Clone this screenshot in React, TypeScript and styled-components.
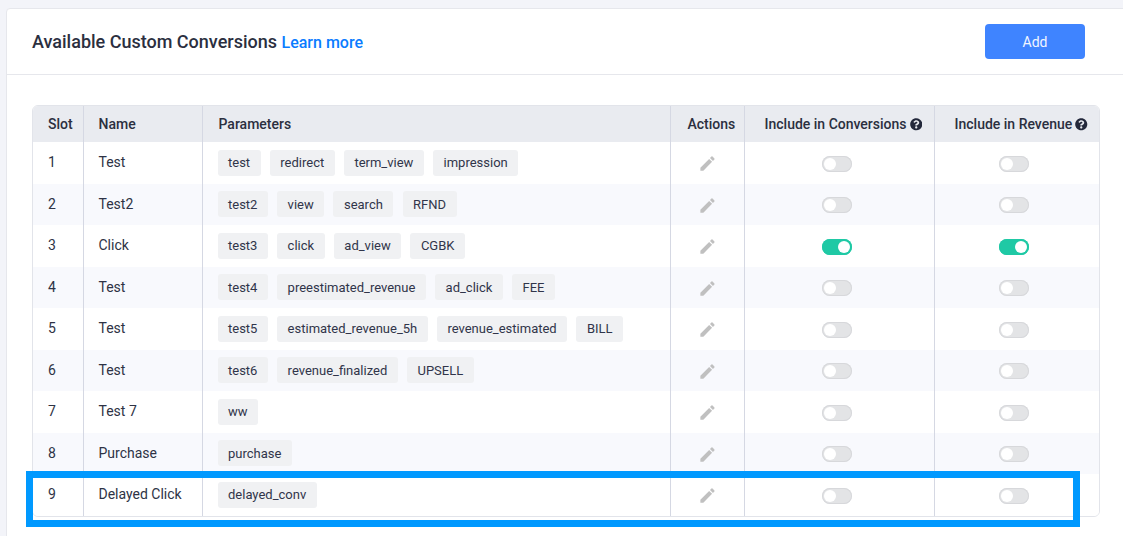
import * as React from 'react'
import styled, { createGlobalStyle } from 'styled-components'
import { FaQuestionCircle } from 'react-icons/fa'
import { MdEdit } from 'react-icons/md'

const GlobalStyle = createGlobalStyle`
  html, body {
    margin: 0;
    height: 100%;
    overflow: hidden;
    background: #f3f4f9;
    font-family: Roboto, "Liberation Sans", sans-serif;
  }
`

const Page = styled.div`
  position: relative;
  width: 1123px;
  height: 536px;
  overflow: hidden;
  padding: 8px 0 0 6px;
  box-sizing: border-box;
`

const Card = styled.section`
  width: 1140px;
  height: 560px;
  background: #fff;
  border: 1px solid #e6e7ec;
  border-radius: 4px;
  box-sizing: border-box;
`

const CardHeader = styled.header`
  display: flex;
  align-items: center;
  justify-content: space-between;
  height: 65px;
  padding: 0 37px 0 25px;
  border-bottom: 1px solid #e6e7ec;
`

const Title = styled.h2`
  margin: 0;
  font-size: 18px;
  font-weight: 500;
  color: #2b2f3f;
`

const LearnMore = styled.a`
  font-size: 16px;
  font-weight: 500;
  color: #0a7cff;
  text-decoration: none;
`

const AddButton = styled.button`
  width: 100px;
  height: 35px;
  margin-right: 23px;
  border: 0;
  border-radius: 4px;
  background: #3f84ff;
  color: #f1f5ff;
  font: 400 14px Roboto, sans-serif;
`

const CardBody = styled.div`
  padding: 30px 0 0 25px;
`

const TableFrame = styled.div`
  width: 1068px;
  border: 1px solid #e2e4ea;
  border-radius: 6px;
  overflow: hidden;
  box-sizing: border-box;
`

const Table = styled.table`
  width: 1066px;
  table-layout: fixed;
  border-collapse: collapse;
  font-size: 14px;
  color: #2e3345;
`

const HeadCell = styled.th<{ $inset?: number }>`
  height: 36px;
  padding: 0 0 0 ${(p) => p.$inset ?? 15}px;
  background: #e9ebf0;
  border-left: 1px solid #d5d8e3;
  font-weight: 500;
  text-align: left;
  white-space: nowrap;
  color: #2b2f3f;
  &:first-child {
    border-left: 0;
  }
`

const Row = styled.tr<{ $shaded: boolean }>`
  height: 41.5px;
  background: ${(p) => (p.$shaded ? '#f8f9fd' : '#fff')};
`

const Cell = styled.td`
  padding: 0 0 1px 15px;
  border-left: 1px solid #d5d8e3;
  box-sizing: border-box;
  &:first-child {
    border-left: 0;
  }
`

const TagCell = styled(Cell)`
  padding: 0 0 0 15px;
`

const ControlCell = styled(Cell)<{ $right?: number }>`
  padding: 2px ${(p) => p.$right ?? 0}px 0 0;
`

const TagList = styled.div`
  display: flex;
  gap: 9.2px;
`

const Tag = styled.span`
  display: inline-flex;
  align-items: center;
  height: 26px;
  padding: 0 10.5px;
  border-radius: 3px;
  background: #f0f1f3;
  font-size: 13px;
  color: #30354a;
`

const HelpIcon = styled(FaQuestionCircle)`
  width: 12.5px;
  height: 12.5px;
  margin-left: 3px;
  vertical-align: -1.5px;
  color: #23283b;
`

const PencilIcon = styled(MdEdit)`
  display: block;
  width: 19px;
  height: 19px;
  margin: 0 auto;
  color: #c0c0c0;
`

const Toggle = styled.span<{ $on: boolean }>`
  display: flex;
  justify-content: ${(p) => (p.$on ? 'flex-end' : 'flex-start')};
  width: 30px;
  height: 16px;
  margin: 0 auto;
  padding: 2px;
  border-radius: 8px;
  box-sizing: border-box;
  background: ${(p) => (p.$on ? '#1fc9a5' : '#e3e4e6')};
  box-shadow: inset 0 0 0 1px ${(p) => (p.$on ? '#1fc9a5' : '#d7d8db')};
  &::after {
    content: '';
    width: 12px;
    height: 12px;
    border-radius: 50%;
    background: #fff;
  }
`

const Highlight = styled.div`
  position: absolute;
  left: 26px;
  top: 471px;
  width: 1054px;
  height: 56px;
  border: 7px solid #0099ff;
  box-sizing: border-box;
  pointer-events: none;
`

const rows = [
  { name: 'Test', params: ['test', 'redirect', 'term_view', 'impression'] },
  { name: 'Test2', params: ['test2', 'view', 'search', 'RFND'] },
  { name: 'Click', params: ['test3', 'click', 'ad_view', 'CGBK'], on: true },
  { name: 'Test', params: ['test4', 'preestimated_revenue', 'ad_click', 'FEE'] },
  { name: 'Test', params: ['test5', 'estimated_revenue_5h', 'revenue_estimated', 'BILL'] },
  { name: 'Test', params: ['test6', 'revenue_finalized', 'UPSELL'] },
  { name: 'Test 7', params: ['ww'] },
  { name: 'Purchase', params: ['purchase'] },
  { name: 'Delayed Click', params: ['delayed_conv'] },
]

export default function App() {
  return (
    <Page>
      <GlobalStyle />
      <Card>
        <CardHeader>
          <Title>
            Available Custom Conversions <LearnMore href="#">Learn more</LearnMore>
          </Title>
          <AddButton>Add</AddButton>
        </CardHeader>
        <CardBody>
          <TableFrame>
            <Table>
              <colgroup>
                <col width={50} />
                <col width={119} />
                <col width={468} />
                <col width={74} />
                <col width={190} />
                <col width={165} />
              </colgroup>
              <thead>
                <tr>
                  <HeadCell>Slot</HeadCell>
                  <HeadCell>Name</HeadCell>
                  <HeadCell $inset={16}>Parameters</HeadCell>
                  <HeadCell $inset={17}>Actions</HeadCell>
                  <HeadCell $inset={20}>
                    Include in Conversions
                    <HelpIcon />
                  </HeadCell>
                  <HeadCell $inset={20}>
                    Include in Revenue
                    <HelpIcon />
                  </HeadCell>
                </tr>
              </thead>
              <tbody>
                {rows.map((row, i) => (
                  <Row key={i} $shaded={i % 2 === 1}>
                    <Cell>{i + 1}</Cell>
                    <Cell>{row.name}</Cell>
                    <TagCell>
                      <TagList>
                        {row.params.map((p) => (
                          <Tag key={p}>{p}</Tag>
                        ))}
                      </TagList>
                    </TagCell>
                    <ControlCell>
                      <PencilIcon />
                    </ControlCell>
                    <ControlCell $right={4}>
                      <Toggle $on={!!row.on} />
                    </ControlCell>
                    <ControlCell $right={6}>
                      <Toggle $on={!!row.on} />
                    </ControlCell>
                  </Row>
                ))}
              </tbody>
            </Table>
          </TableFrame>
        </CardBody>
      </Card>
      <Highlight />
    </Page>
  )
}
